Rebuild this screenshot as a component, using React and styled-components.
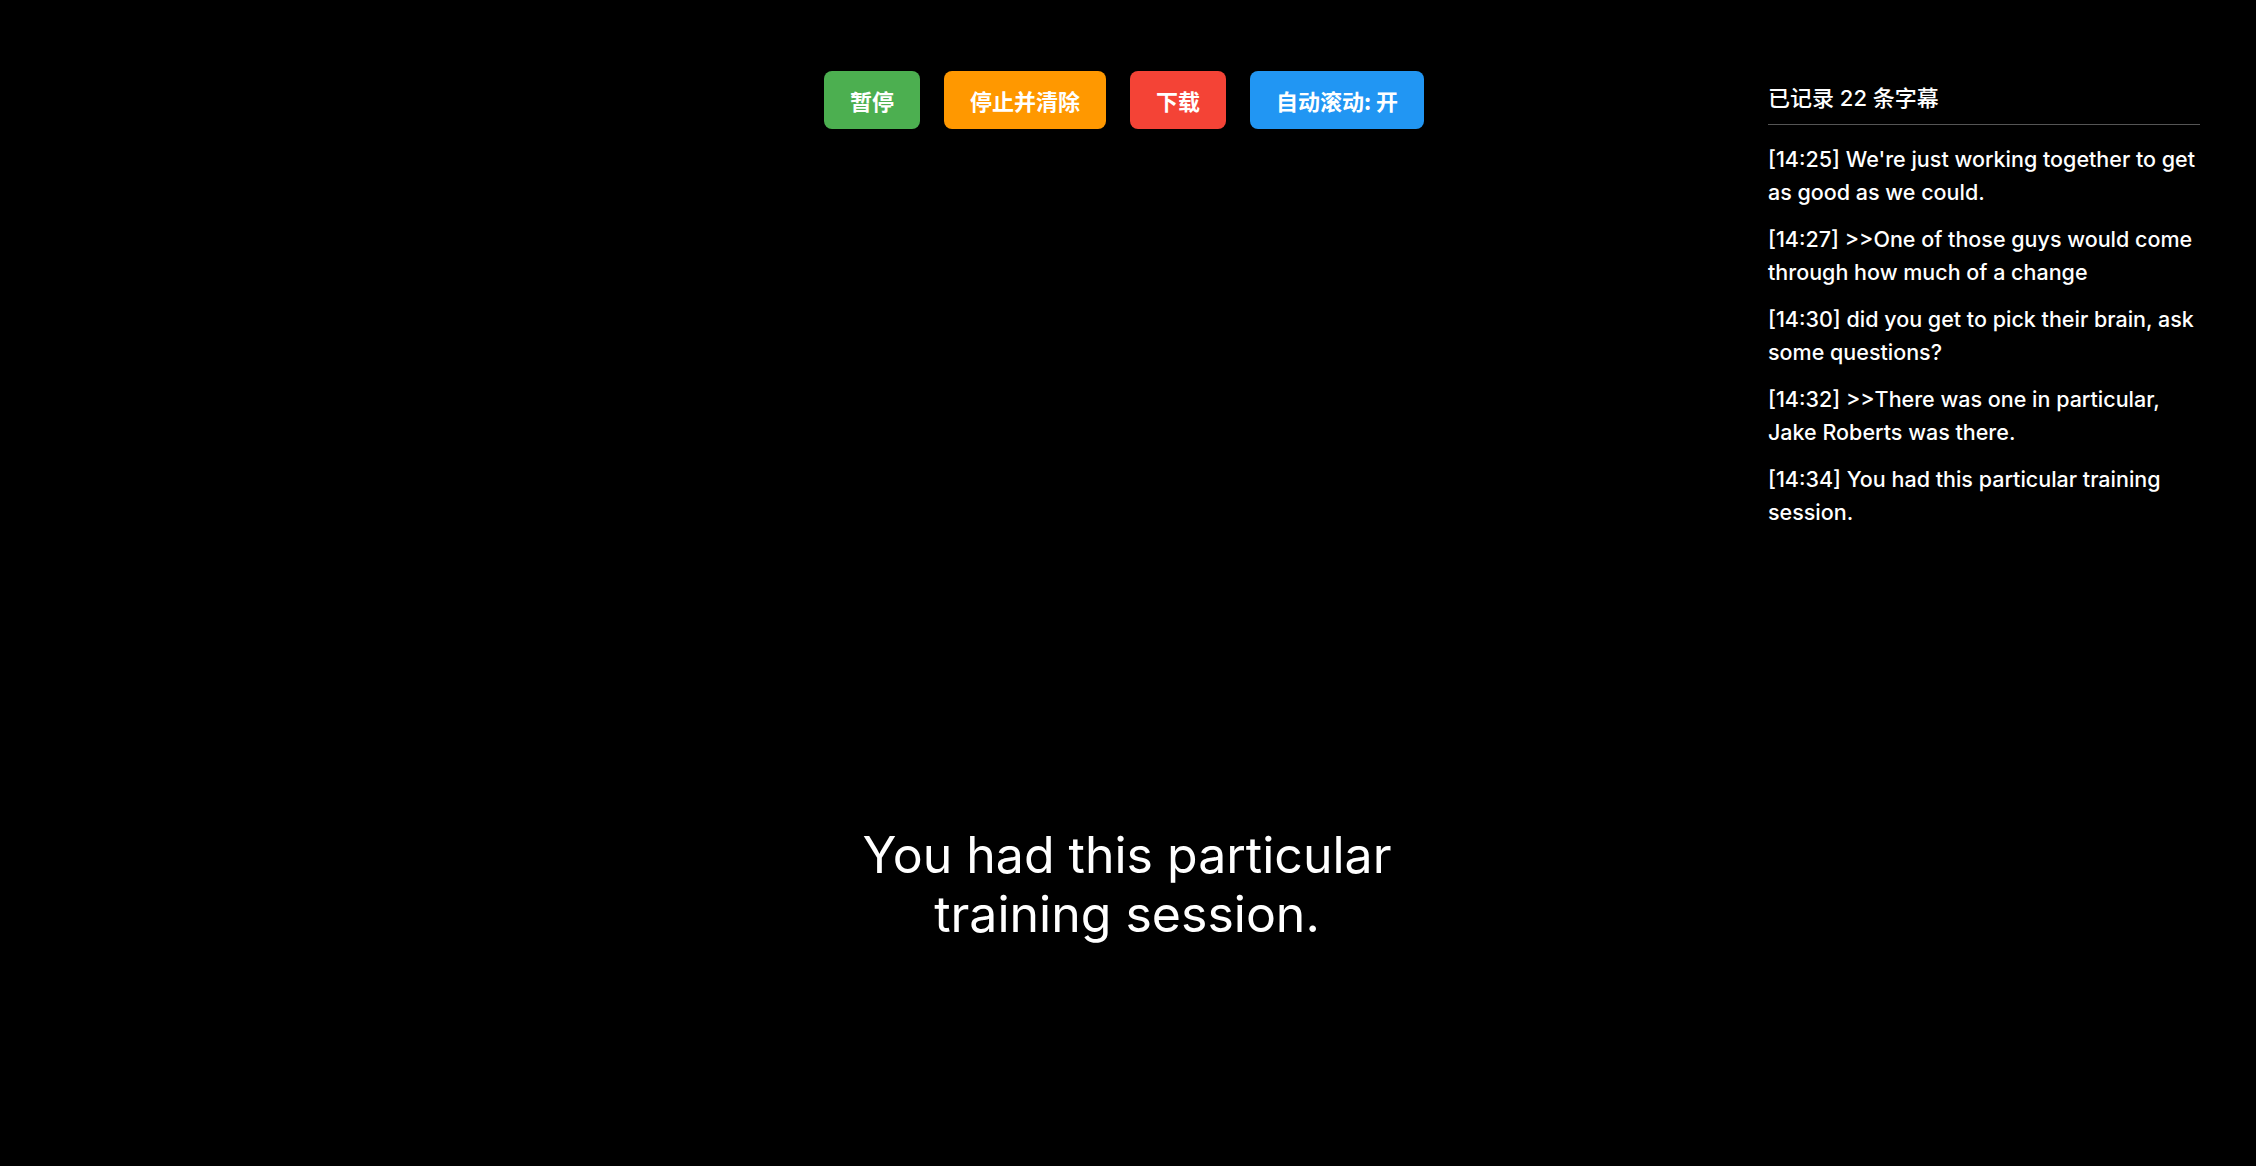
import React from 'react';
import styled, { createGlobalStyle } from 'styled-components';

const GlobalStyle = createGlobalStyle`
	html, body {
		margin: 0;
		padding: 0;
		background: #000;
	}
	body {
		font-family: Inter, "Noto Sans CJK SC", sans-serif;
		color: #fff;
	}
`;

const Page = styled.div`
	display: flex;
	flex-direction: row;
	width: 2256px;
	height: 1166px;
	background: #000;
	overflow: hidden;
`;

const Stage = styled.div`
	flex: 1;
	display: flex;
	flex-direction: column;
	padding-left: 486px;
`;

const Toolbar = styled.div`
	display: flex;
	flex-direction: row;
	justify-content: center;
	gap: 24px;
	margin-top: 71px;
	padding-right: 6px;
`;

const Button = styled.button`
	height: 58px;
	padding: 0 26px;
	border: none;
	border-radius: 8px;
	background: ${props => props.color};
	color: #fff;
	font-family: "Noto Sans CJK SC", Inter, sans-serif;
	font-size: 22px;
	font-weight: 700;
	cursor: pointer;
`;

const CaptionArea = styled.div`
	flex: 1;
	display: flex;
	justify-content: center;
	padding-top: 697px;
`;

const Caption = styled.div`
	max-width: 600px;
	text-align: center;
	font-family: Inter, sans-serif;
	font-size: 50px;
	line-height: 59px;
	color: #fff;
`;

const Sidebar = styled.div`
	width: 432px;
	margin-right: 56px;
	padding-top: 81px;
	display: flex;
	flex-direction: column;
`;

const SidebarTitle = styled.div`
	font-family: Inter, "Noto Sans CJK SC", sans-serif;
	font-size: 22px;
	font-weight: 500;
	line-height: 34px;
	padding-bottom: 9px;
	border-bottom: 1px solid #555;
`;

const EntryList = styled.div`
	display: flex;
	flex-direction: column;
	gap: 14px;
	padding-top: 18px;
`;

const Entry = styled.div`
	font-family: Inter, sans-serif;
	font-size: 21.5px;
	font-weight: 500;
	line-height: 33px;
	color: #fff;
`;

const buttons = [
	{ label: '暂停', color: '#4caf50' },
	{ label: '停止并清除', color: '#ff9800' },
	{ label: '下载', color: '#f44336' },
	{ label: '自动滚动: 开', color: '#2196f3' },
];

const entries = [
	{ time: '14:25', text: "We're just working together to get as good as we could." },
	{ time: '14:27', text: '>>One of those guys would come through how much of a change' },
	{ time: '14:30', text: 'did you get to pick their brain, ask some questions?' },
	{ time: '14:32', text: '>>There was one in particular, Jake Roberts was there.' },
	{ time: '14:34', text: 'You had this particular training session.' },
];

const App = () => {
	return (
		<Page>
			<GlobalStyle />
			<Stage>
				<Toolbar>
					{buttons.map(b => (
						<Button key={b.label} color={b.color}>{b.label}</Button>
					))}
				</Toolbar>
				<CaptionArea>
					<Caption>You had this particular training session.</Caption>
				</CaptionArea>
			</Stage>
			<Sidebar>
				<SidebarTitle>已记录 22 条字幕</SidebarTitle>
				<EntryList>
					{entries.map(e => (
						<Entry key={e.time}>[{e.time}] {e.text}</Entry>
					))}
				</EntryList>
			</Sidebar>
		</Page>
	);
};

export default App;
